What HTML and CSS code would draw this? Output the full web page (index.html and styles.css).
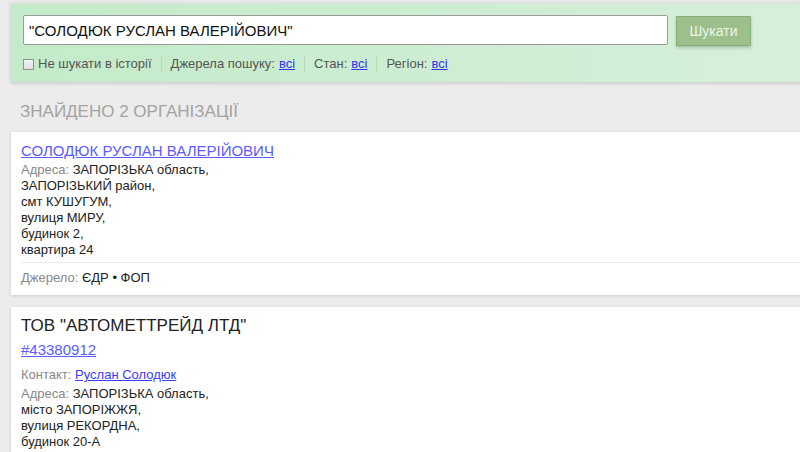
FILE: index.html
```html
<!DOCTYPE html>
<html lang="uk">
<head>
<meta charset="utf-8">
<link rel="stylesheet" href="styles.css">
</head>
<body>
<div class="page">
  <form class="search">
    <div class="search-row">
      <input class="query" type="text" value="&quot;СОЛОДЮК РУСЛАН ВАЛЕРІЙОВИЧ&quot;">
      <button class="btn" type="button">Шукати</button>
    </div>
    <div class="filters">
      <label class="filter first"><span class="cb"></span>Не шукати в історії</label>
      <span class="filter">Джерела пошуку: <a href="#">всі</a></span>
      <span class="filter">Стан: <a href="#">всі</a></span>
      <span class="filter last">Регіон: <a href="#">всі</a></span>
    </div>
  </form>

  <h2 class="found">Знайдено 2 організації</h2>

  <div class="card">
    <a class="title-link" href="#">СОЛОДЮК РУСЛАН ВАЛЕРІЙОВИЧ</a>
    <div class="addr"><span class="lbl">Адреса:</span> ЗАПОРІЗЬКА область,<br>ЗАПОРІЗЬКИЙ район,<br>смт КУШУГУМ,<br>вулиця МИРУ,<br>будинок 2,<br>квартира 24</div>
    <div class="src"><span class="lbl">Джерело:</span> ЄДР • ФОП</div>
  </div>

  <div class="card">
    <div class="title">ТОВ "АВТОМЕТТРЕЙД ЛТД"</div>
    <a class="code" href="#">#43380912</a>
    <div class="contact"><span class="lbl">Контакт:</span> <a href="#">Руслан Солодюк</a></div>
    <div class="addr2"><span class="lbl">Адреса:</span> ЗАПОРІЗЬКА область,<br>місто ЗАПОРІЖЖЯ,<br>вулиця РЕКОРДНА,<br>будинок 20-А</div>
  </div>
</div>
</body>
</html>
```
FILE: styles.css
```css
html, body {
  margin: 0;
  padding: 0;
  background: #ececec;
  overflow: hidden;
  font-family: "Liberation Sans", Arial, sans-serif;
  color: #222;
}
.page {
  width: 800px;
  padding: 3px 0 0 11px;
}
.search {
  width: 800px;
  height: 79px;
  box-sizing: border-box;
  padding: 11px 0 0 12px;
  background: linear-gradient(to right, #c3ebc9, #d7efda);
  border-top: 1px solid #d9e6da;
  box-shadow: 0 1px 4px rgba(0,0,0,0.18);
}
.search-row {
  display: flex;
  align-items: flex-start;
}
.query {
  width: 645px;
  height: 30px;
  box-sizing: border-box;
  margin: 0;
  border: 1px solid #9a9a9a;
  border-radius: 2px;
  padding: 0 0 0 5px;
  font: 15px "Liberation Sans", Arial, sans-serif;
  color: #111;
  background: #fff;
}
.btn {
  margin: 1px 0 0 8px;
  width: 75px;
  height: 30px;
  border: 1px solid #86ae77;
  background: #9cbf8b;
  color: #eef5ea;
  font: 14px "Liberation Sans", Arial, sans-serif;
  box-shadow: 0 2px 3px rgba(0,0,0,0.2);
  padding: 0;
}
.filters {
  display: flex;
  align-items: center;
  margin-top: 10px;
  font-size: 13px;
  color: #555;
}
.filter {
  display: flex;
  align-items: center;
  height: 16px;
  padding: 0 9px;
  border-left: 1px solid #b9d9bd;
  line-height: 16px;
}
.filter.first { border-left: 0; padding-left: 0; }
.filter a { color: #3333ff; margin-left: 4px; }
.cb {
  width: 11px;
  height: 11px;
  box-sizing: border-box;
  border: 1px solid #8f8f8f;
  background: linear-gradient(#f3f3f3, #dedede);
  margin: 0 4px 0 0;
}
.found {
  margin: 0;
  padding: 20px 0 0 9px;
  height: 30px;
  font-size: 17px;
  font-weight: normal;
  text-transform: uppercase;
  color: #a3a3a3;
  line-height: 20px;
}
.card {
  width: 800px;
  box-sizing: border-box;
  background: #fff;
  padding: 9px 0 9px 10px;
  margin-bottom: 12px;
  box-shadow: 0 1px 3px rgba(0,0,0,0.15);
  font-size: 13px;
  line-height: 16px;
}
.title-link {
  display: block;
  width: fit-content;
  font-size: 15px;
  line-height: 20px;
  color: #5b5bff;
}
.lbl { color: #888; }
.addr {
  margin-top: 1px;
  padding-bottom: 4px;
  border-bottom: 1px solid #eaeaea;
}
.src { margin-top: 7px; }
.title {
  font-size: 17px;
  line-height: 20px;
  color: #222;
}
.code {
  display: block;
  width: fit-content;
  margin-top: 4px;
  font-size: 15px;
  line-height: 20px;
  color: #5b5bff;
}
.contact { margin-top: 7px; }
.contact a { color: #3c3cff; }
.addr2 { margin-top: 3px; }
```
